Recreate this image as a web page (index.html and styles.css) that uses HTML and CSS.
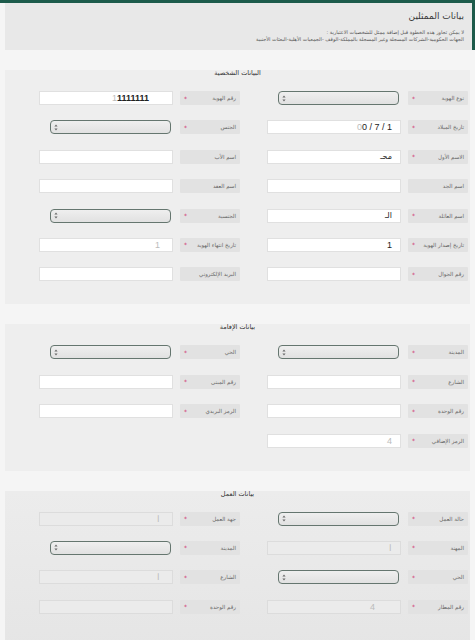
FILE: index.html
```html
<!DOCTYPE html>
<html lang="ar" dir="rtl">
<head>
  <meta charset="UTF-8">
  <meta name="viewport" content="width=device-width, initial-scale=1.0">
  <title>بيانات الممثلين</title>
  <link rel="stylesheet" href="styles.css">
</head>
<body>

  <div class="topbar"></div>

  <!-- تنبيه أعلى الصفحة -->
  <div class="notice">
    <h1 class="notice-title">بيانات الممثلين</h1>
    <p class="notice-text">
      لا يمكن تجاوز هذه الخطوة قبل إضافة ممثل للشخصيات الاعتبارية :<br>
      الجهات الحكومية-الشركات المسجلة وغير المسجلة بالمملكة-الوقف -الجمعيات الأهلية-البعثات الأجنبية
    </p>
  </div>

  <!-- البيانات الشخصية -->
  <section class="panel">
    <h2 class="panel-title">البيانات الشخصية</h2>
    <div class="fields">
      <div class="field">
        <div class="label">نوع الهوية<span class="req">*</span></div>
        <div class="select"><svg class="arrows" viewBox="0 0 4 7"><path d="M2 0.5 L3.6 2.6 H0.4 Z M2 6.5 L3.6 4.4 H0.4 Z"/></svg></div>
      </div>
      <div class="field">
        <div class="label">رقم الهوية<span class="req">*</span></div>
        <div class="control id-number"><span class="ltr"><span class="faint">1</span>1111111</span></div>
      </div>

      <div class="field">
        <div class="label">تاريخ الميلاد<span class="req">*</span></div>
        <div class="control"><span class="ltr"><span class="faint">0</span>0 / 7 / 1</span></div>
      </div>
      <div class="field">
        <div class="label">الجنس<span class="req">*</span></div>
        <div class="select"><svg class="arrows" viewBox="0 0 4 7"><path d="M2 0.5 L3.6 2.6 H0.4 Z M2 6.5 L3.6 4.4 H0.4 Z"/></svg></div>
      </div>

      <div class="field">
        <div class="label">الاسم الأول<span class="req">*</span></div>
        <div class="control arabic">محـ</div>
      </div>
      <div class="field">
        <div class="label">اسم الأب</div>
        <div class="control"></div>
      </div>

      <div class="field">
        <div class="label">اسم الجد</div>
        <div class="control"></div>
      </div>
      <div class="field">
        <div class="label">اسم العقد</div>
        <div class="control"></div>
      </div>

      <div class="field">
        <div class="label">اسم العائلة<span class="req">*</span></div>
        <div class="control arabic">الـ</div>
      </div>
      <div class="field">
        <div class="label">الجنسية<span class="req">*</span></div>
        <div class="select"><svg class="arrows" viewBox="0 0 4 7"><path d="M2 0.5 L3.6 2.6 H0.4 Z M2 6.5 L3.6 4.4 H0.4 Z"/></svg></div>
      </div>

      <div class="field">
        <div class="label">تاريخ إصدار الهوية<span class="req">*</span></div>
        <div class="control">1</div>
      </div>
      <div class="field">
        <div class="label">تاريخ انتهاء الهوية<span class="req">*</span></div>
        <div class="control pad-wide"><span class="faint">1</span></div>
      </div>

      <div class="field">
        <div class="label">رقم الجوال<span class="req">*</span></div>
        <div class="control"></div>
      </div>
      <div class="field">
        <div class="label">البريد الإلكتروني</div>
        <div class="control"></div>
      </div>
    </div>
  </section>

  <!-- بيانات الإقامة -->
  <section class="panel">
    <h2 class="panel-title">بيانات الإقامة</h2>
    <div class="fields">
      <div class="field">
        <div class="label">المدينة<span class="req">*</span></div>
        <div class="select"><svg class="arrows" viewBox="0 0 4 7"><path d="M2 0.5 L3.6 2.6 H0.4 Z M2 6.5 L3.6 4.4 H0.4 Z"/></svg></div>
      </div>
      <div class="field">
        <div class="label">الحي<span class="req">*</span></div>
        <div class="select"><svg class="arrows" viewBox="0 0 4 7"><path d="M2 0.5 L3.6 2.6 H0.4 Z M2 6.5 L3.6 4.4 H0.4 Z"/></svg></div>
      </div>

      <div class="field">
        <div class="label">الشارع<span class="req">*</span></div>
        <div class="control"></div>
      </div>
      <div class="field">
        <div class="label">رقم المبنى<span class="req">*</span></div>
        <div class="control"></div>
      </div>

      <div class="field">
        <div class="label">رقم الوحدة<span class="req">*</span></div>
        <div class="control"></div>
      </div>
      <div class="field">
        <div class="label">الرمز البريدي<span class="req">*</span></div>
        <div class="control"></div>
      </div>

      <div class="field">
        <div class="label">الرمز الإضافي<span class="req">*</span></div>
        <div class="control"><span class="faint">4</span></div>
      </div>
    </div>
  </section>

  <!-- بيانات العمل -->
  <section class="panel panel-work">
    <h2 class="panel-title">بيانات العمل</h2>
    <div class="fields">
      <div class="field">
        <div class="label">حالة العمل<span class="req">*</span></div>
        <div class="select"><svg class="arrows" viewBox="0 0 4 7"><path d="M2 0.5 L3.6 2.6 H0.4 Z M2 6.5 L3.6 4.4 H0.4 Z"/></svg></div>
      </div>
      <div class="field">
        <div class="label">جهة العمل<span class="req">*</span></div>
        <div class="control disabled pad-wide"><span class="faint">ا</span></div>
      </div>

      <div class="field">
        <div class="label">المهنة<span class="req">*</span></div>
        <div class="control disabled"><span class="faint">ا</span></div>
      </div>
      <div class="field">
        <div class="label">المدينة<span class="req">*</span></div>
        <div class="select"><svg class="arrows" viewBox="0 0 4 7"><path d="M2 0.5 L3.6 2.6 H0.4 Z M2 6.5 L3.6 4.4 H0.4 Z"/></svg></div>
      </div>

      <div class="field">
        <div class="label">الحي<span class="req">*</span></div>
        <div class="select"><svg class="arrows" viewBox="0 0 4 7"><path d="M2 0.5 L3.6 2.6 H0.4 Z M2 6.5 L3.6 4.4 H0.4 Z"/></svg></div>
      </div>
      <div class="field">
        <div class="label">الشارع<span class="req">*</span></div>
        <div class="control disabled pad-wide"><span class="faint">ا</span></div>
      </div>

      <div class="field">
        <div class="label">رقم المطار<span class="req">*</span></div>
        <div class="control disabled pad-far"><span class="faint">4</span></div>
      </div>
      <div class="field">
        <div class="label">رقم الوحدة<span class="req">*</span></div>
        <div class="control disabled"></div>
      </div>
    </div>
  </section>

</body>
</html>
```

FILE: styles.css
```css
/* Общие стили */
* {
  box-sizing: border-box;
}

body {
  margin: 0;
  background-color: #f5f5f5;
  font-family: "DejaVu Sans", sans-serif;
  color: #444;
}

.topbar {
  height: 3px;
  background-color: #1d5b4b;
}

/* Блок с предупреждением */
.notice {
  margin-left: 5px;
  height: 47px;
  padding: 7px 8px 0 0;
  background-color: #e8e8e8;
  border-right: 3px solid #1d5b4b;
}

.notice-title {
  margin: 0;
  font-size: 9px;
  line-height: 12px;
  font-weight: normal;
  color: #3a3a3a;
}

.notice-text {
  margin: 7px 0 0;
  font-size: 5px;
  line-height: 6.5px;
  color: #555;
}

/* Секции формы */
.panel {
  margin: 20px 5px 0;
  padding-bottom: 23px;
  background-color: #eeeeee;
}

.panel-work {
  background: linear-gradient(#ececec, #e5e5e5);
  padding-bottom: 40px;
}

.panel-title {
  margin: 0;
  height: 6px;
  line-height: 6px;
  font-size: 6.5px;
  font-weight: normal;
  text-align: center;
  color: #333;
}

.fields {
  display: grid;
  grid-template-columns: 228px 228px;
  row-gap: 15.4px;
  margin-top: 15px;
  padding-right: 2px;
}

.field {
  display: flex;
  height: 14px;
  gap: 7px;
}

.label {
  width: 60px;
  display: flex;
  align-items: center;
  padding: 0 4px;
  background-color: #e2e2e2;
  border-radius: 1px;
  font-size: 5.5px;
  color: #666;
  white-space: nowrap;
}

.req {
  margin-right: auto;
  color: #d0306a;
  font-size: 6px;
}

/* Поля ввода */
.control {
  width: 134px;
  display: flex;
  align-items: center;
  padding: 0 8px;
  background-color: #fff;
  border: 1px solid #e0e0e0;
  font-family: "Liberation Sans", Arial, sans-serif;
  font-size: 9px;
  color: #222;
}

.control.arabic {
  font-family: "DejaVu Sans", sans-serif;
  font-size: 8px;
}

.control.id-number {
  padding-right: 23px;
  font-weight: bold;
}

.control.pad-wide {
  padding-right: 12px;
}

.control.pad-far {
  padding-right: 25px;
}

.control.disabled {
  background-color: #ebebeb;
  border-color: #dcdcdc;
}

.ltr {
  direction: ltr;
  unicode-bidi: isolate;
}

.faint {
  color: #bbb;
  font-weight: normal;
}

/* Выпадающие списки */
.select {
  width: 121px;
  margin-right: 2px;
  display: flex;
  align-items: center;
  justify-content: flex-end;
  padding-left: 3px;
  background: linear-gradient(#efefef, #e1e1e1);
  border: 1.5px solid #65766f;
  border-radius: 4px;
}

.arrows {
  width: 4px;
  height: 7px;
  fill: #6b6b6b;
}
```
